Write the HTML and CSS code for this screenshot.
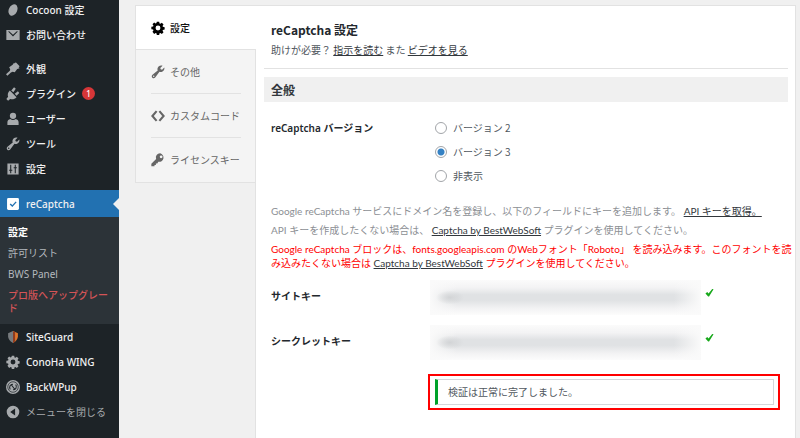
FILE: index.html
```html
<!DOCTYPE html>
<html lang="ja">
<head>
<meta charset="utf-8">
<title>reCaptcha 設定</title>
<link rel="stylesheet" href="styles.css">
</head>
<body>
<svg width="0" height="0" class="defs" aria-hidden="true">
  <symbol id="gear" viewBox="0 0 20 20"><path fill-rule="evenodd" d="M8.3 1h3.4l.5 2.5 1.2.5 2.1-1.4 2.4 2.4L16.500 7.100l.5 1.200 2.500.5v3.400l-2.500.5-.5 1.200 1.400 2.100-2.400 2.400-2.100-1.400-1.200.5-.5 2.500H8.300l-.5-2.500-1.200-.5-2.100 1.400L2.100 15.500l1.400-2.100-.5-1.200L.5 11.700V8.300L3 7.800l.5-1.200L2.100 4.500 4.500 2.100 6.600 3.500 7.800 3zM10 6.500a3.500 3.500 0 1 0 0 7a3.500 3.500 0 0 0 0-7z"/></symbol>
  <symbol id="wrench" viewBox="0 0 20 20"><path fill-rule="evenodd" d="M17.700 8.300c-1.400 1.700-3.700 2.200-5.600 1.500L6 17.900c-1.100 1.300-2.900 1.400-4.100.2-1.200-1.200-1.100-3 .2-4.100L9.600 8C8.800 6.100 9.200 3.800 10.800 2.300 12.300.8 14.500.4 16.500 1l-3.200 3.200.5 2 2 .5L19 3.500c.6 2-.2 3.500-1.300 4.800zM3.900 15.100a1 1 0 1 0 0 2a1 1 0 0 0 0-2z"/></symbol>
</svg>
<div class="layout">
  <nav class="sidebar">
    <ul class="menu">
      <li><a class="item" href="#"><svg class="icon" viewBox="0 0 20 20"><ellipse cx="10" cy="10" rx="6" ry="8.500" transform="rotate(25 10 10)"/></svg>Cocoon 設定</a></li>
      <li><a class="item" href="#"><svg class="icon" viewBox="0 0 20 20"><path fill-rule="evenodd" d="M.5 3h19v14H.5zM3 5l7 7 7-7-1.500-.5L10 9.500 4.500 4.500z"/></svg>お問い合わせ</a></li>
      <li class="split"><a class="item" href="#"><svg class="icon" viewBox="0 0 20 20"><path d="M11.500 1 19.500 9l-3.500 1-3.500 4.500-3-.5-2.500 1L2 19.500 0 17.500 5.500 12.500l.5-2-1.500-3 5-3.500zM14 .5l5.500 5.500-1.500 1.500-5.500-5.500z"/></svg>外観</a></li>
      <li><a class="item" href="#"><svg class="icon" viewBox="0 0 20 20"><path d="m5.500 5 9.500 9.500c-2.500 3-6 3.500-9 2.500L3 19.500.5 17l2.500-3C2 11 2.500 7.500 5.500 5zM7.500 5 11.500.500l2.500 2L10.500 7.500zM12.500 9.500l4.500-3.500 2 2.500-4 4z"/></svg>プラグイン<span class="badge">1</span></a></li>
      <li><a class="item" href="#"><svg class="icon" viewBox="0 0 20 20"><circle cx="10" cy="5.500" r="4.500"/><path d="M2 18.500v-4c0-2.500 2-4 4-4.500 2.500 2 5.500 2 8 0 2 .5 4 2 4 4.500v4z"/></svg>ユーザー</a></li>
      <li><a class="item" href="#"><svg class="icon"><use href="#wrench"/></svg>ツール</a></li>
      <li><a class="item" href="#"><svg class="icon" viewBox="0 0 20 20"><path fill-rule="evenodd" d="M2 2h16v16H2zM6 4h1.500v7H9v1.500H7.500V16H6v-3.500H4.500V11H6zM12.500 4H14v3.500h1.500V9H14v7h-1.500V9H11V7.500h1.500z"/></svg>設定</a></li>
      <li class="split"><a class="item current" href="#"><svg class="icon" viewBox="0 0 20 20"><rect x="1.500" y="1.500" width="17" height="17" rx="2"/><path d="m6 10 3 3 5.500-6" fill="none" stroke="#2271b1" stroke-width="2"/></svg>reCaptcha</a>
        <ul class="submenu">
          <li><a class="on" href="#">設定</a></li>
          <li><a href="#">許可リスト</a></li>
          <li><a href="#">BWS Panel</a></li>
          <li><a class="upgrade" href="#">プロ版へアップグレード</a></li>
        </ul>
      </li>
      <li><a class="item" href="#"><svg class="icon" viewBox="0 0 20 20"><path fill="#777b7e" d="M3 4.500 10 1.500v17C5 16 3 12.500 3 9z"/><path fill="#e0762b" d="m10 1.500 7 3V9c0 3.500-2 7-7 9.500z"/><path fill="#8f3c20" d="m10 2 3 1v13.500L10 18.500z"/></svg>SiteGuard</a></li>
      <li><a class="item" href="#"><svg class="icon"><use href="#gear"/></svg>ConoHa WING</a></li>
      <li><a class="item" href="#"><svg class="icon" viewBox="0 0 20 20"><circle cx="10" cy="10" r="10"/><circle cx="10" cy="10" r="7.500" fill="none" stroke="#1d2327"/><path d="M6 13.500c-2-4 0-7.500 4-7.500M14 6.500c2 4 0 7.500-4 7.500M7 6l6 8" fill="none" stroke="#1d2327" stroke-width="1.500"/></svg>BackWPup</a></li>
      <li><button class="item collapse" type="button"><svg class="icon" viewBox="0 0 20 20"><path fill-rule="evenodd" d="M10 1a9 9 0 1 0 0 18a9 9 0 0 0 0-18zM13 5v10l-7-5z"/></svg>メニューを閉じる</button></li>
    </ul>
  </nav>
  <main class="page">
    <nav class="tabs">
      <a class="tab active" href="#"><svg class="icon"><use href="#gear"/></svg><span>設定</span></a>
      <a class="tab" href="#"><svg class="icon"><use href="#wrench"/></svg><span>その他</span></a>
      <a class="tab" href="#"><svg class="icon" viewBox="0 0 20 20"><path d="M8 3 2 10l6 7M12 3l6 7-6 7" fill="none" stroke="currentColor" stroke-width="3"/></svg><span>カスタムコード</span></a>
      <a class="tab" href="#"><svg class="icon" viewBox="0 0 20 20"><path fill-rule="evenodd" d="M13 .5a6 6 0 0 0-5.700 8L.5 15.500V19h4.500v-2h2v-2h2l1.500-2.500A6 6 0 1 0 13 .5zM14.500 3.500a2 2 0 1 1 0 4a2 2 0 0 1 0-4z"/></svg><span>ライセンスキー</span></a>
    </nav>
    <section class="content">
      <header class="head">
        <h1>reCaptcha 設定</h1>
        <p>助けが必要？ <a href="#">指示を読む</a> また <a href="#">ビデオを見る</a></p>
      </header>
      <h2>全般</h2>
      <form class="form">
        <fieldset class="row versions">
          <legend class="label">reCaptcha バージョン</legend>
          <div class="radios">
            <label><input type="radio" name="version">バージョン 2</label>
            <label><input type="radio" name="version" checked>バージョン 3</label>
            <label><input type="radio" name="version">非表示</label>
          </div>
        </fieldset>
        <div class="notes">
          <p>Google reCaptcha サービスにドメイン名を登録し、以下のフィールドにキーを追加します。 <a href="#">API キーを取得。</a></p>
          <p>API キーを作成したくない場合は、 <a href="#">Captcha by BestWebSoft</a> プラグインを使用してください。</p>
          <p class="warn">Google reCaptcha ブロックは、fonts.googleapis.com のWebフォント「Roboto」 を読み込みます。このフォントを読<br>み込みたくない場合は <a href="#">Captcha by BestWebSoft</a> プラグインを使用してください。</p>
        </div>
        <div class="row key">
          <label class="label" for="site">サイトキー</label>
          <div class="field"><input id="site" class="masked" type="text" readonly><svg class="check" viewBox="0 0 10 10"><path d="M.5 6 2.500 4.500 4 6 8 1l1.500.5L4.500 9.500H3.500z"/></svg></div>
        </div>
        <div class="row key">
          <label class="label" for="secret">シークレットキー</label>
          <div class="field"><input id="secret" class="masked" type="text" readonly><svg class="check" viewBox="0 0 10 10"><path d="M.5 6 2.500 4.500 4 6 8 1l1.500.5L4.500 9.500H3.500z"/></svg></div>
        </div>
        <div class="row">
          <div class="result"><p class="notice">検証は正常に完了しました。</p></div>
        </div>
      </form>
    </section>
  </main>
</div>
</body>
</html>
```
FILE: styles.css
```css
* { box-sizing: border-box; }
body {
  margin: 0;
  background: #f0f0f0;
  color: #50575e;
  font: 10px/14px "Noto Sans CJK JP", sans-serif;
}
h1, h2, p, ul, fieldset, legend { margin: 0; padding: 0; border: 0; }
ul { list-style: none; }
a { color: inherit; }
.defs { position: absolute; }
.icon { width: 14px; height: 14px; flex: none; fill: currentColor; }

.layout { display: flex; min-height: 100vh; }

.sidebar {
  flex: 0 0 119px;
  background: #1d2327;
  overflow: hidden;
  font-family: "Noto Sans", "Noto Sans CJK JP", sans-serif;
}
.menu { margin-top: -3px; }
.item {
  display: flex;
  align-items: center;
  gap: 6px;
  width: 100%;
  height: 25px;
  padding: 0 0 0 6px;
  border: 0;
  background: none;
  color: #f0f0f1;
  font: inherit;
  font-weight: 500;
  text-decoration: none;
}
.item .icon { color: #a7aaad; }
.split { margin-top: 9px; }
.badge {
  width: 13px;
  height: 13px;
  border-radius: 50%;
  background: #d63638;
  color: #fff;
  font-size: 8px;
  line-height: 13px;
  text-align: center;
}
.current { position: relative; height: 27px; background: #2271b1; }
.current .icon { color: #fff; }
.current::after {
  content: "";
  position: absolute;
  right: 0;
  border: 6px solid transparent;
  border-left: 0;
  border-right-color: #f0f0f0;
}
.submenu { padding: 5px 8px 5px; background: #2c3338; }
.submenu a {
  display: block;
  padding: 4px 0;
  color: #b4b9be;
  line-height: 13px;
  text-decoration: none;
}
.submenu .on { color: #fff; font-weight: 700; }
.submenu .upgrade { color: #d45457; font-weight: 500; }
.collapse { color: #a7aaad; font-weight: 400; }

.page { display: flex; flex: 1; min-width: 0; padding: 5px 4px 0 16px; }
.tabs {
  flex: 0 0 121px;
  position: relative;
  align-self: flex-start;
  margin-right: -1px;
  border: 1px solid #e2e2e2;
  background: #f4f4f4;
}
.tab {
  display: flex;
  align-items: center;
  gap: 5px;
  height: 44px;
  margin: 0 14px 0 15px;
  border-bottom: 1px solid #e2e2e2;
  color: #666;
  text-decoration: none;
}
.tab:last-child { border-bottom: 0; }
.tab.active { margin: 0 -1px 0 0; padding-left: 15px; background: #fff; color: #111; font-weight: 500; }
.active .icon { color: #000; }
.content {
  flex: 1;
  min-width: 0;
  padding: 0 7px 0 8px;
  border: 1px solid #e2e2e2;
  border-bottom: 0;
  background: #fff;
}
.head { padding: 15px 7px 11px; border-bottom: 1px solid #e2e2e2; }
.content a { color: #32373c; }
h1 { color: #23282d; font: 600 12px/18px "Noto Sans CJK JP", sans-serif; }
.head p { margin-top: 4px; }
h2 {
  margin-top: 8px;
  padding: 0 7px;
  background: #f0f0f0;
  color: #32373c;
  font-size: 12px;
  line-height: 25px;
  font-weight: 600;
}
.form { padding: 0 7px; }
.row { display: grid; grid-template-columns: 157px 1fr; }
.label { color: #23282d; font-family: "Noto Sans", "Noto Sans CJK JP", sans-serif; font-weight: 600; }
.versions { padding-top: 19px; }
.versions .label { float: left; }
.radios { grid-column: 2; padding-left: 7px; display: grid; gap: 10px; }
.radios label { display: flex; align-items: center; gap: 6px; line-height: 14px; }
.radios input {
  appearance: none;
  width: 12px;
  height: 12px;
  margin: 0;
  border: 1px solid #a2a5a9;
  border-radius: 50%;
  background: #fff;
}
.radios input:checked { background: radial-gradient(circle, #3582c4 3px, #fff 4px); }
.notes {
  margin-top: 21px;
  color: #8c8f94;
  font-family: Lato, "Noto Sans CJK JP", sans-serif;
  white-space: nowrap;
}
.notes p { line-height: 15px; margin-top: 4px; }
.notes .warn { color: #f00; line-height: 14px; }
.key { margin-top: 10px; }
.key .label { padding-top: 9px; }
.field { display: flex; align-items: flex-start; gap: 4px; padding-left: 2px; }
.masked {
  width: 271px;
  height: 35px;
  border: 0;
  outline: 0;
  background:
    radial-gradient(ellipse 14px 7px at 20px 50%, #d2d4d6, transparent),
    linear-gradient(90deg, #fafafa, transparent 10%, transparent 90%, #fafafa),
    linear-gradient(#fbfbfb, #f3f3f4 22%, #e0e2e4 42%, #e0e2e4 58%, #f3f3f4 82%, #fcfcfc);
}
.check { width: 9px; height: 9px; margin-top: 8px; fill: #17a81a; }
.result {
  grid-column: 2;
  margin: 14px 1px 0 0;
  padding: 3px 4px 3px 5px;
  border: 2px solid #f00;
}
.notice {
  padding: 5px 10px;
  border: 1px solid #d5d7da;
  border-left: 3px solid #00a32a;
}
```
